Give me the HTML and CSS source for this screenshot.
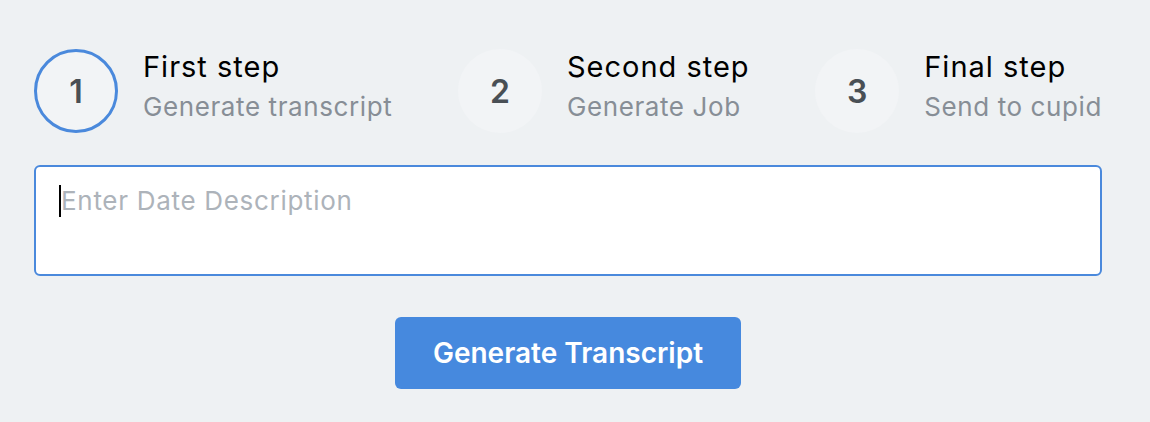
FILE: index.html
```html
<!DOCTYPE html>
<html lang="en">
<head>
<meta charset="utf-8">
<title>Steps</title>
<link rel="stylesheet" href="styles.css">
</head>
<body>
<main class="page">
  <div class="steps">
    <div class="step">
      <div class="num active">1</div>
      <div class="step-text">
        <div class="title">First step</div>
        <div class="sub">Generate transcript</div>
      </div>
    </div>
    <div class="step">
      <div class="num">2</div>
      <div class="step-text">
        <div class="title">Second step</div>
        <div class="sub">Generate Job</div>
      </div>
    </div>
    <div class="step">
      <div class="num">3</div>
      <div class="step-text">
        <div class="title">Final step</div>
        <div class="sub">Send to cupid</div>
      </div>
    </div>
  </div>
  <div class="field">
    <span class="caret"></span><span class="placeholder">Enter Date Description</span>
  </div>
  <div class="actions">
    <button class="btn">Generate Transcript</button>
  </div>
</main>
</body>
</html>
```
FILE: styles.css
```css
html, body {
  margin: 0;
  padding: 0;
  background: #eef1f3;
  font-family: Inter, "Noto Sans", "Liberation Sans", sans-serif;
}
.page {
  width: 1068px;
  margin-left: 34px;
  padding-top: 49px;
}
.steps {
  display: flex;
  justify-content: space-between;
  align-items: center;
}
.step {
  display: flex;
  align-items: center;
  gap: 25px;
}
.num {
  width: 84px;
  height: 84px;
  box-sizing: border-box;
  border-radius: 50%;
  background: #f2f4f6;
  display: flex;
  align-items: center;
  justify-content: center;
  font-size: 32px;
  font-weight: 600;
  color: #494f55;
}
.num.active {
  border: 3px solid #4a89dc;
}
.step-text {
  display: flex;
  flex-direction: column;
  padding-bottom: 8px;
}
.title {
  font-size: 29px;
  line-height: 36px;
  letter-spacing: 1px;
  color: #000;
  font-weight: 400;
}
.sub {
  margin-top: 4px;
  font-size: 26px;
  line-height: 36px;
  letter-spacing: 0.6px;
  color: #878e96;
}
.field {
  margin-top: 32px;
  height: 111px;
  box-sizing: border-box;
  background: #fff;
  border: 2px solid #4a89dc;
  border-radius: 6px;
  padding: 18px 23px;
  display: flex;
  align-items: flex-start;
}
.caret {
  width: 2px;
  height: 32px;
  background: #000;
}
.placeholder {
  font-size: 26px;
  line-height: 32px;
  letter-spacing: 0.7px;
  color: #adb3ba;
}
.actions {
  display: flex;
  justify-content: center;
  margin-top: 41px;
}
.btn {
  width: 346px;
  height: 72px;
  border: none;
  border-radius: 6px;
  background: #4689de;
  color: #fff;
  font-family: inherit;
  font-size: 28px;
  font-weight: 600;
}
```
